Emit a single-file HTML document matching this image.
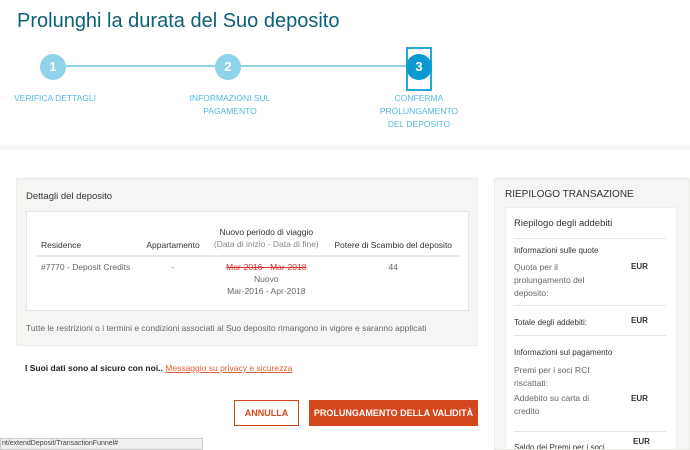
<!DOCTYPE html>
<html><head><meta charset="utf-8"><style>
*{box-sizing:border-box;margin:0;padding:0}
html,body{width:690px;height:450px;overflow:hidden}
body{background:#fff;font-family:"Liberation Sans",sans-serif;position:relative;color:#333}
.abs{position:absolute}
h1{position:absolute;left:17px;top:10px;font-size:20px;font-weight:normal;color:#0d6077;white-space:nowrap}
.c{position:absolute;width:26px;height:26px;border-radius:50%;background:#8fd3ea;color:#fff;font-size:13px;font-weight:bold;text-align:center;line-height:26px}
.lbl{position:absolute;font-size:8.5px;color:#55b9dc;text-align:center;line-height:13px;white-space:nowrap}
.panel{background:#f6f5f3;border:1px solid #ecebe8}
.small{font-size:8.5px}
th{font-weight:normal;font-size:8.5px;color:#333;padding:0 5px 5px}
td{font-size:8.5px;color:#666;text-align:center;vertical-align:top;padding:4px 5px;line-height:12px}
.r{font-size:8.5px;color:#666;line-height:13px}
.sep{border-top:1px solid #e6e6e6}
</style></head><body>
<h1>Prolunghi la durata del Suo deposito</h1>
<div class="abs" style="left:53px;top:65px;width:365px;height:2px;background:#8fd3ea"></div>
<div class="c" style="left:40px;top:54px">1</div>
<div class="c" style="left:215px;top:54px">2</div>
<div class="abs" style="left:406px;top:47px;width:26px;height:44px;border:2px solid #2aa6d6"></div>
<div class="c" style="left:406px;top:54px;background:#0a9ad0">3</div>
<div class="lbl" style="left:10px;top:92px;width:90px">VERIFICA DETTAGLI</div>
<div class="lbl" style="left:180px;top:92px;width:100px">INFORMAZIONI SUL<br>PAGAMENTO</div>
<div class="lbl" style="left:370px;top:92px;width:98px">CONFERMA<br>PROLUNGAMENTO<br>DEL DEPOSITO</div>
<div class="abs" style="left:0;top:145px;width:690px;height:5px;background:#f7f7f7"></div>

<div class="abs panel" style="left:16px;top:178px;width:462px;height:168px">
 <div class="abs" style="left:9px;top:12px;font-size:9.5px;color:#333">Dettagli del deposito</div>
 <div class="abs" style="left:9px;top:32px;width:443px;height:100px;background:#fff;border:1px solid #e6e6e6">
  <table style="position:absolute;left:9px;top:14px;width:424px;border-collapse:collapse">
   <tr style="border-bottom:2px solid #e8e8e8"><th style="text-align:left;vertical-align:bottom">Residence</th><th style="vertical-align:bottom">Appartamento</th><th style="line-height:12px">Nuovo periodo di viaggio<br><span style="color:#888">(Data di inizio - Data di fine)</span></th><th style="vertical-align:bottom">Potere di Scambio del deposito</th></tr>
   <tr><td style="text-align:left">#7770 - Deposit Credits</td><td>-</td><td><span style="text-decoration:line-through;color:#c0392b;text-decoration-color:#e03030">Mar-2016 - Mar-2018</span><br>Nuovo<br>Mar-2016 - Apr-2018</td><td>44</td></tr>
  </table>
 </div>
 <div class="abs small" style="left:9px;top:144px;color:#666">Tutte le restrizioni o i termini e condizioni associati al Suo deposito rimangono in vigore e saranno applicati</div>
</div>

<div class="abs" style="left:25px;top:363px;font-size:8.5px;font-weight:bold;color:#222">I Suoi dati sono al sicuro con noi.. <span style="font-weight:normal;color:#e0603a;text-decoration:underline">Messaggio su privacy e sicurezza</span></div>
<div class="abs" style="left:234px;top:400px;width:65px;height:26px;border:1px solid #d4461b;color:#d4461b;font-size:9px;font-weight:bold;text-align:center;line-height:24px">ANNULLA</div>
<div class="abs" style="left:309px;top:400px;width:169px;height:26px;background:#d4461b;color:#fff;font-size:9px;font-weight:bold;text-align:center;line-height:26px">PROLUNGAMENTO DELLA VALIDITÀ</div>
<div class="abs" style="left:0;top:438px;width:203px;height:12px;background:#f0f0f0;border:1px solid #ccc;font-size:7px;color:#444;line-height:10px;padding-left:1px">nt/extendDeposit/TransactionFunnel#</div>

<div class="abs panel" style="left:494px;top:178px;width:196px;height:272px;overflow:hidden">
 <div class="abs" style="left:10px;top:10px;font-size:10px;color:#333">RIEPILOGO TRANSAZIONE</div>
 <div class="abs" style="left:10px;top:28px;width:172px;height:250px;background:#fff;border:1px solid #eee;overflow:hidden">
  <div class="abs" style="left:8px;top:10px;font-size:9.5px;color:#333">Riepilogo degli addebiti</div>
  <div class="abs sep" style="left:8px;top:30px;width:152px"></div>
  <div class="abs" style="left:8px;top:38px;font-size:8px;color:#333">Informazioni sulle quote</div>
  <div class="abs r" style="left:8px;top:53px;width:80px">Quota per il prolungamento del deposito:</div>
  <div class="abs" style="left:125px;top:54px;font-size:8px;font-weight:bold">EUR</div>
  <div class="abs sep" style="left:8px;top:97px;width:152px"></div>
  <div class="abs" style="left:8px;top:110px;font-size:8px;color:#333">Totale degli addebiti:</div>
  <div class="abs" style="left:125px;top:108px;font-size:8px;font-weight:bold">EUR</div>
  <div class="abs sep" style="left:8px;top:127px;width:152px"></div>
  <div class="abs" style="left:8px;top:140px;font-size:8px;color:#333">Informazioni sul pagamento</div>
  <div class="abs r" style="left:8px;top:156px;width:100px">Premi per i soci RCI riscattati:</div>
  <div class="abs r" style="left:8px;top:184px;width:100px">Addebito su carta di credito</div>
  <div class="abs" style="left:125px;top:186px;font-size:8px;font-weight:bold">EUR</div>
  <div class="abs sep" style="left:8px;top:223px;width:152px"></div>
  <div class="abs" style="left:8px;top:233px;width:105px;font-size:8px;color:#333;line-height:13px">Saldo dei Premi per i soci RCI</div>
  <div class="abs" style="left:127px;top:229px;font-size:8px;font-weight:bold">EUR</div>
 </div>
</div>
</body></html>
